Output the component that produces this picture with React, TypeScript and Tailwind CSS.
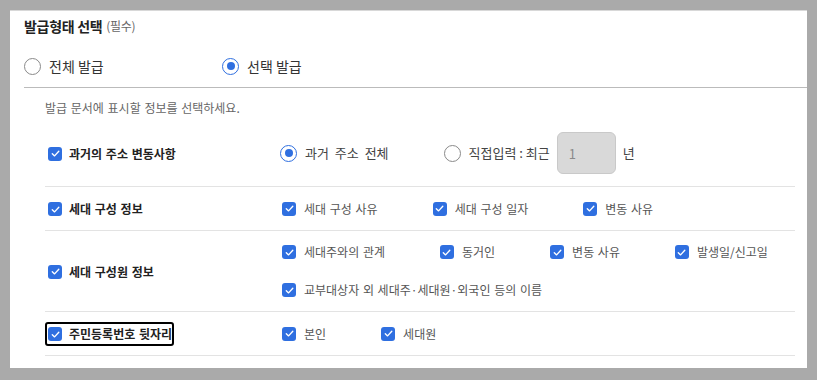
import { useState } from 'react';

const font = { fontFamily: '"Noto Sans CJK KR", "Noto Sans", sans-serif' };

function CheckMark({ checked }: { checked: boolean }) {
  return (
    <span className={`flex h-[14px] w-[14px] shrink-0 items-center justify-center rounded-[3px] ${checked ? 'bg-[#2f6fe0]' : 'border border-[#767676] bg-white'}`}>
      {checked ? (
        <svg viewBox="0 0 12 12" className="h-[11px] w-[11px]" fill="none">
          <path d="M2.5 6.2 L5 8.6 L9.6 3.6" stroke="white" strokeWidth="1.5" strokeLinecap="round" strokeLinejoin="round" />
        </svg>
      ) : null}
    </span>
  );
}

function RadioMark({ checked }: { checked: boolean }) {
  return (
    <span className={`flex h-[17px] w-[17px] shrink-0 items-center justify-center rounded-full border bg-white ${checked ? 'border-[#2f6fe0]' : 'border-[#8a8a8a]'}`}>
      {checked ? <span className="h-[8px] w-[8px] rounded-full bg-[#2f6fe0]" /> : null}
    </span>
  );
}

function Option({ label, checked = true }: { label: string; checked?: boolean }) {
  return (
    <label className="flex h-[20px] items-center gap-[8px] text-[12px] text-[#555]">
      <CheckMark checked={checked} />
      <span>{label}</span>
    </label>
  );
}

interface InfoRow {
  label: string;
  options: string[];
  height: string;
  focused?: boolean;
}

const infoRows: InfoRow[] = [
  { label: '세대 구성 정보', options: ['세대 구성 사유', '세대 구성 일자', '변동 사유'], height: 'h-[44px]' },
  {
    label: '세대 구성원 정보',
    options: ['세대주와의 관계', '동거인', '변동 사유', '발생일/신고일', '교부대상자 외 세대주·세대원·외국인 등의 이름'],
    height: 'h-[81px]',
  },
  { label: '주민등록번호 뒷자리', options: ['본인', '세대원'], height: 'h-[44px]', focused: true },
];

function RowLabel({ label, focused }: { label: string; focused?: boolean }) {
  return (
    <div className="w-[237px] shrink-0">
      <span className={`inline-flex h-[24px] items-center gap-[7px] rounded-[3px] pl-[1px] pr-0 text-[12px] font-bold text-[#222] [word-spacing:1px] ${focused ? 'border-2 border-black' : 'border-2 border-transparent'}`}>
        <CheckMark checked />
        {label}
      </span>
    </div>
  );
}

export default function App() {
  const [issueType, setIssueType] = useState<'all' | 'select'>('select');
  const [pastMode, setPastMode] = useState<'all' | 'input'>('all');

  return (
    <div className="h-[380px] w-[817px] bg-[#aaaaaa] pl-[10px] pt-[10px]" style={font}>
      <div className="h-[358px] w-[797px] border-t border-[#d8d8d8] bg-white pl-[14px] pt-[6px]">
        <h2 className="flex h-[18px] items-center text-[14px] font-bold text-[#222] tracking-[-0.3px]">
          발급형태 선택
          <span className="ml-[4px] text-[12px] font-normal text-[#666]">(필수)</span>
        </h2>

        <div className="mt-[19px] flex h-[24px] items-center text-[14px] text-[#333] [word-spacing:1px]">
          <button type="button" className="flex w-[198px] items-center gap-[8px]" onClick={() => setIssueType('all')}>
            <RadioMark checked={issueType === 'all'} />
            전체 발급
          </button>
          <button type="button" className="flex items-center gap-[8px]" onClick={() => setIssueType('select')}>
            <RadioMark checked={issueType === 'select'} />
            선택 발급
          </button>
        </div>

        <div className="mt-[9px] border-t border-[#bbbbbb] pl-[21px] pr-[12px]">
          <p className="flex h-[40px] items-center text-[12px] text-[#666] [word-spacing:1px]">발급 문서에 표시할 정보를 선택하세요.</p>

          <div className="flex items-center border-b border-[#e3e3e3] pb-[12px] pt-[4px]">
            <RowLabel label="과거의 주소 변동사항" />
            <div className="-ml-[2px] flex items-center gap-[55px] text-[13px] text-[#444]">
              <button type="button" className="flex items-center gap-[8px] [word-spacing:3px]" onClick={() => setPastMode('all')}>
                <RadioMark checked={pastMode === 'all'} />
                과거 주소 전체
              </button>
              <div className="flex items-center gap-[7px]">
                <button type="button" className="flex items-center gap-[8px]" onClick={() => setPastMode('input')}>
                  <RadioMark checked={pastMode === 'input'} />
                  직접입력 : 최근
                </button>
                <input
                  className="h-[42px] w-[59px] rounded-[6px] border border-[#c9c9c9] bg-[#d9d9d9] pl-[11px] text-[13px] text-[#8a8a8a]"
                  value="1"
                  disabled
                  readOnly
                />
                <span>년</span>
              </div>
            </div>
          </div>

          {infoRows.map((row) => (
            <div key={row.label} className={`flex items-center border-b border-[#e3e3e3] ${row.height}`}>
              <RowLabel label={row.label} focused={row.focused} />
              <div className="flex flex-wrap gap-x-[55px] gap-y-[18px] [word-spacing:1px]">
                {row.options.map((option) => (
                  <Option key={option} label={option} />
                ))}
              </div>
            </div>
          ))}
        </div>
      </div>
    </div>
  );
}
